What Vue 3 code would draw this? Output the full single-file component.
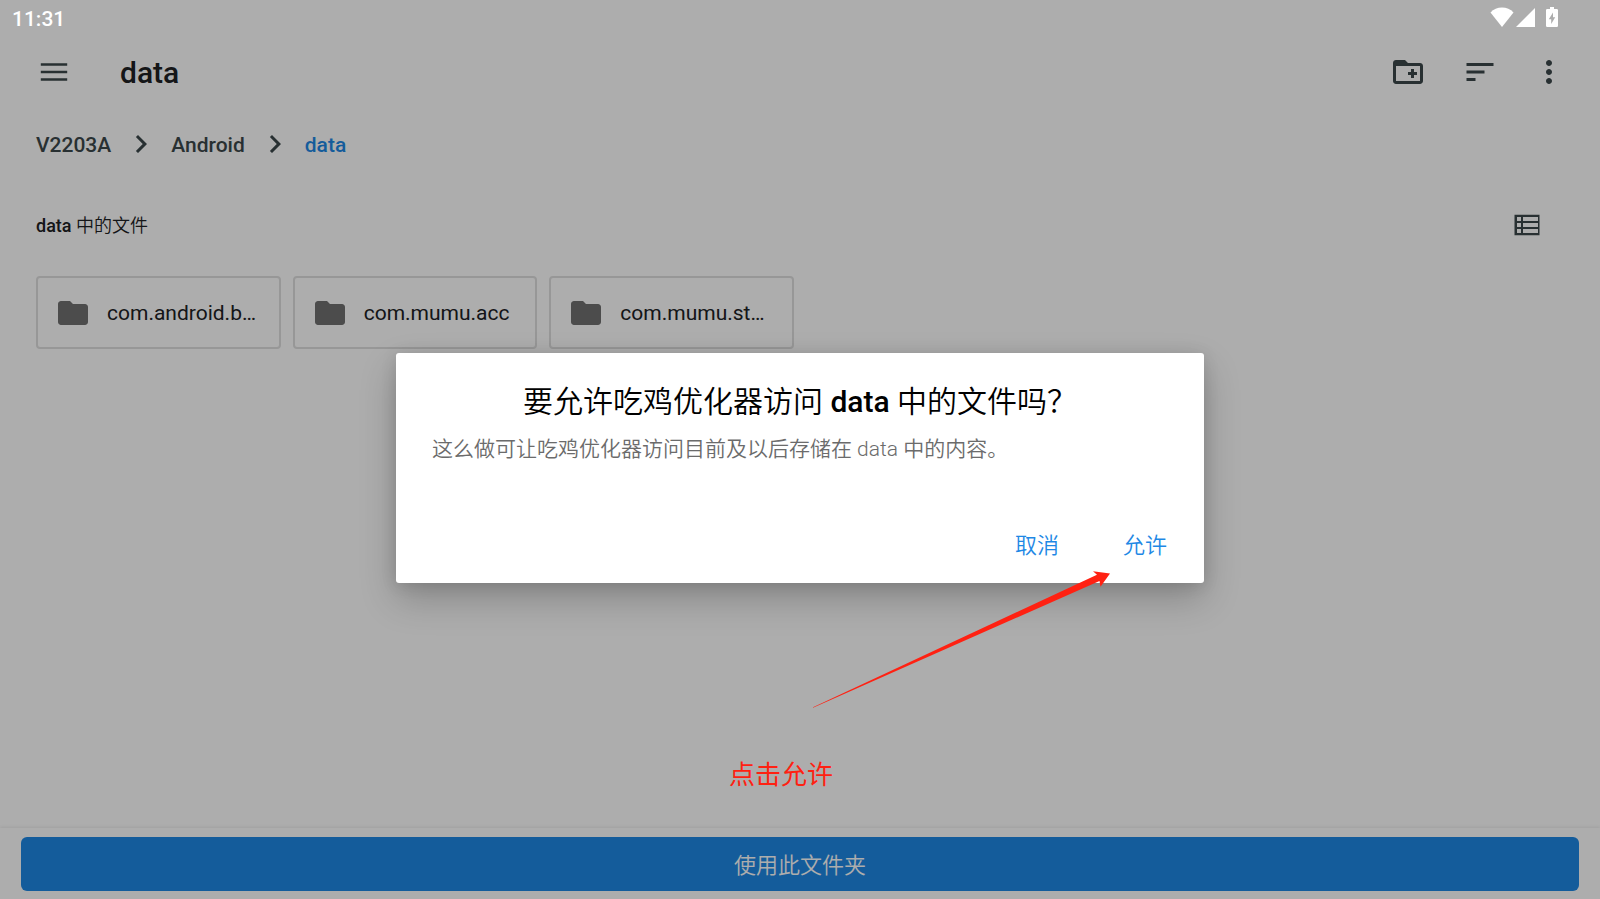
<script setup>
import { ref } from 'vue'

const crumbs = ['V2203A', 'Android', 'data']
const folders = ['com.android.b…', 'com.mumu.acc', 'com.mumu.st…']
const dialogOpen = ref(true)

function closeDialog() {
  dialogOpen.value = false
}
</script>

<template>
  <div class="screen">
    <div class="status-bar">
      <span class="clock">11:31</span>
      <div class="status-icons">
        <svg class="wifi" width="24" height="20" viewBox="0 0 24 20" aria-hidden="true">
          <path d="M12 20 .5 5.500C3.500 2.200 7.500 .5 12 .5s8.500 1.700 11.500 5z" />
        </svg>
        <svg class="signal" width="19" height="20" viewBox="0 0 19 20" aria-hidden="true">
          <path d="M0 20 19 1v19z" />
        </svg>
        <svg width="12" height="20" viewBox="0 0 12 20" aria-hidden="true">
          <path
            fill-rule="evenodd"
            d="M4 0h4v2h2.700Q12 2 12 3.300v15.400Q12 20 10.700 20H1.300Q0 20 0 18.700V3.300Q0 2 1.300 2H4zM7 5.500 2.800 12.200h2.400v4.800l4-6.800H7z"
          />
        </svg>
      </div>
    </div>

    <header class="toolbar">
      <button type="button" class="icon-btn" aria-label="菜单">
        <svg class="icon" viewBox="0 0 24 24">
          <path d="M3.200 6.200h17.600v1.600H3.200zM3.200 11.200h17.600v1.600H3.200zM3.200 16.200h17.600v1.600H3.200z" />
        </svg>
      </button>
      <h1>data</h1>
      <div class="actions">
        <button type="button" class="icon-btn" aria-label="新建文件夹">
          <svg class="icon" viewBox="0 0 24 24">
            <path
              fill-rule="evenodd"
              d="M20 6h-8l-2-2H4c-1.110 0-2 .89-2 2v12c0 1.110.89 2 2 2h16c1.110 0 2-.89 2-2V8c0-1.110-.89-2-2-2zM4 8h16v10H4zM12 14h2v2h2v-2h2v-2h-2v-2h-2v2h-2z"
            />
          </svg>
        </button>
        <button type="button" class="icon-btn" aria-label="排序">
          <svg class="icon" viewBox="0 0 24 24">
            <path d="M3 18h6v-2H3v2zM3 6v2h18V6H3zm0 7h12v-2H3v2z" />
          </svg>
        </button>
        <button type="button" class="icon-btn more" aria-label="更多选项">
          <svg class="icon" viewBox="0 0 24 24">
            <path
              d="M12 8c1.100 0 2-.9 2-2s-.9-2-2-2-2 .9-2 2 .9 2 2 2zm0 2c-1.100 0-2 .9-2 2s.9 2 2 2 2-.9 2-2-.9-2-2-2zm0 6c-1.100 0-2 .9-2 2s.9 2 2 2 2-.9 2-2-.9-2-2-2z"
            />
          </svg>
        </button>
      </div>
    </header>

    <nav class="breadcrumb">
      <template v-for="(crumb, index) in crumbs" :key="crumb">
        <svg v-if="index > 0" class="icon" viewBox="0 0 24 24" aria-hidden="true">
          <path d="M10 6 8.590 7.410 13.170 12l-4.580 4.590L10 18l6-6z" />
        </svg>
        <a href="#" :class="{ current: index === crumbs.length - 1 }" @click.prevent>{{ crumb }}</a>
      </template>
    </nav>

    <main class="content">
      <div class="section-head">
        <h2><b>data</b> 中的文件</h2>
        <button type="button" class="icon-btn" aria-label="列表视图">
          <svg class="icon" viewBox="0 0 36 36">
            <path
              fill-rule="evenodd"
              d="M5.500 7.700h25v20.600h-25zM8 10v4h4v-4zM14 10v4h15v-4zM8 16v4h4v-4zM14 16v4h15v-4zM8 22v4h4v-4zM14 22v4h15v-4z"
            />
          </svg>
        </button>
      </div>
      <div class="grid">
        <button v-for="folder in folders" :key="folder" type="button" class="folder">
          <svg class="icon" viewBox="0 0 24 24" aria-hidden="true">
            <path
              d="M10 4H4c-1.100 0-2 .9-2 2v12c0 1.100.9 2 2 2h16c1.100 0 2-.9 2-2V8c0-1.100-.9-2-2-2h-8l-2-2z"
            />
          </svg>
          <span>{{ folder }}</span>
        </button>
      </div>
    </main>

    <footer class="footer">
      <button type="button" class="use-btn">使用此文件夹</button>
    </footer>

    <div v-if="dialogOpen" class="backdrop">
      <div class="dialog" role="dialog" aria-modal="true" aria-labelledby="dialog-title">
        <h2 id="dialog-title">要允许吃鸡优化器访问 <b>data</b> 中的文件吗？</h2>
        <p>这么做可让吃鸡优化器访问目前及以后存储在 data 中的内容。</p>
        <div class="dialog-actions">
          <button type="button" @click="closeDialog">取消</button>
          <button type="button" @click="closeDialog">允许</button>
        </div>
      </div>
    </div>

    <div class="hint">
      <svg width="298" height="137" viewBox="0 0 298 137" aria-hidden="true">
        <path d="M0 136.300 284 3.700 280 .3l17 2.200-9.500 13.200-1-5.700L0 136.700z" />
      </svg>
      <span>点击允许</span>
    </div>
  </div>
</template>

<style>
body {
  margin: 0;
}
</style>

<style scoped>
.screen {
  position: relative;
  display: flex;
  flex-direction: column;
  min-height: 100vh;
  overflow: hidden;
  background: #fff;
  color: #202124;
  font-family: Roboto, "Noto Sans CJK SC", sans-serif;
}
h1, h2, p { margin: 0; }
b { font-weight: 500; }
button {
  padding: 0;
  border: none;
  background: transparent;
  color: inherit;
  font: inherit;
  cursor: pointer;
}
.icon {
  display: block;
  flex: none;
  width: 36px;
  height: 36px;
  fill: currentColor;
}
.icon-btn { color: #3c484b; }

.status-bar {
  position: relative;
  z-index: 2;
  display: flex;
  align-items: flex-end;
  justify-content: space-between;
  box-sizing: border-box;
  height: 36px;
  padding: 0 42px 4px 12px;
  color: #fff;
}
.clock {
  font-size: 21px;
  font-weight: 500;
  line-height: 26px;
}
.status-icons {
  display: flex;
  padding-bottom: 5px;
  fill: currentColor;
}
.wifi { margin-right: 2px; }
.signal { margin-right: 11px; }

.toolbar {
  display: flex;
  align-items: center;
  height: 72px;
  padding: 0 36px;
}
.toolbar h1 {
  flex: 1;
  margin-left: 48px;
  font-size: 30px;
  font-weight: 500;
}
.actions {
  display: flex;
  gap: 36px;
}
.more {
  display: flex;
  justify-content: center;
  width: 30px;
}

.breadcrumb {
  display: flex;
  align-items: center;
  gap: 12px;
  height: 72px;
  padding: 0 36px;
  color: #3c484b;
  font-size: 21px;
  font-weight: 500;
  line-height: 28px;
}
.breadcrumb a {
  padding-top: 1px;
  color: inherit;
  text-decoration: none;
}
.breadcrumb .current { color: #1e88e5; }

.content {
  flex: 1;
  padding: 9px 36px 36px;
}
.section-head {
  display: flex;
  align-items: center;
  justify-content: space-between;
  height: 72px;
  margin-bottom: 15px;
  padding-right: 19px;
}
.section-head h2 {
  padding-top: 2px;
  font-size: 18px;
  font-weight: 350;
  line-height: 24px;
}
.grid {
  display: grid;
  grid-template-columns: repeat(6, 1fr);
  gap: 12px;
}
.folder {
  display: flex;
  align-items: center;
  gap: 16px;
  height: 73px;
  padding: 0 18px 0 17px;
  border: 2px solid #dfdfdf;
  border-radius: 4px;
  font-size: 21px;
  line-height: 28px;
  text-align: left;
  white-space: nowrap;
}
.folder .icon { color: #707070; }

.footer {
  padding: 9px 21px 8px;
  box-shadow: 0 -1px 3px rgba(0, 0, 0, 0.08);
}
.use-btn {
  width: 100%;
  height: 54px;
  padding-bottom: 2px;
  border-radius: 6px;
  background: #1e88e5;
  color: #fff;
  font-size: 22px;
  font-weight: 350;
}

.backdrop {
  position: absolute;
  z-index: 1;
  inset: 0;
  display: flex;
  align-items: center;
  justify-content: center;
  padding-top: 36px;
  background: rgba(0, 0, 0, 0.32);
}
.dialog {
  box-sizing: border-box;
  width: 808px;
  max-width: 90%;
  padding: 28px 36px 17px;
  border-radius: 3px;
  background: #fff;
  box-shadow: 0 16px 36px rgba(0, 0, 0, 0.22), 0 2px 16px rgba(0, 0, 0, 0.12);
}
.dialog h2 {
  color: #000;
  font-size: 30px;
  font-weight: 350;
  line-height: 42px;
  text-align: center;
}
.dialog p {
  margin-top: 11px;
  color: #6b6b6b;
  font-size: 21px;
  font-weight: 350;
  line-height: 30px;
}
.dialog-actions {
  display: flex;
  justify-content: flex-end;
  gap: 64px;
  margin-top: 57px;
  padding-right: 1px;
}
.dialog-actions button {
  height: 45px;
  color: #1e88e5;
  font-size: 22px;
  font-weight: 350;
}

/* tip that points at the confirm button */
.hint {
  position: absolute;
  z-index: 3;
  top: calc(50% + 121px);
  left: calc(50% - 71px);
  display: flex;
  flex-direction: column;
  align-items: flex-start;
  gap: 47px;
  color: #ff2112;
  font-size: 26px;
  line-height: 40px;
  pointer-events: none;
}
.hint svg {
  margin-left: 84px;
  fill: currentColor;
}
</style>
